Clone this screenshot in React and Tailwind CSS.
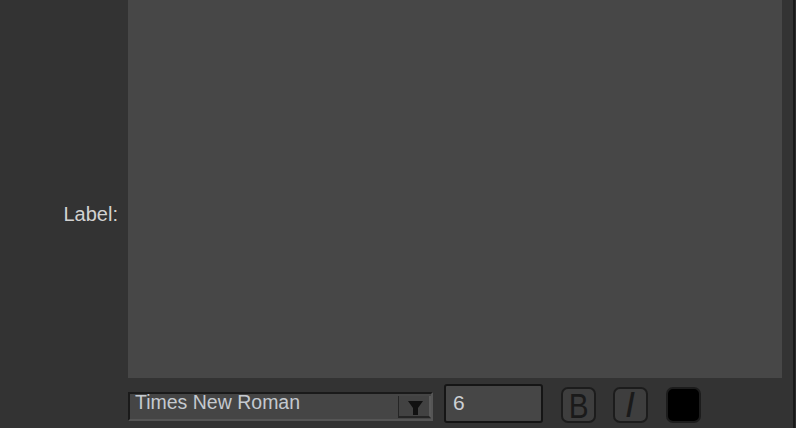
export default function App() {
  const font = { fontFamily: '"Liberation Sans", Arial, Helvetica, sans-serif' };
  return (
    <div className="w-[796px] h-[428px] bg-[#333333] flex overflow-hidden" style={font}>
      <div className="w-[793px] h-full flex flex-col">
        <div className="flex h-[378px]">
          <div className="w-[128px] h-full flex justify-end pr-[10px] pt-[204px]">
            <span className="block text-[20px] leading-none text-[#d2d2d2]">Label:</span>
          </div>
          <div className="w-[654px] h-full bg-[#474747]" />
        </div>
        <div className="flex items-start pl-[128px]">
          <div className="mt-[14px] w-[305px] h-[29px] bg-[#454545] border-t-2 border-l-2 border-[#1a1a1a] border-b-2 border-r-2 border-b-[#555555] border-r-[#555555] flex items-start justify-between">
            <span className="block pl-[5px] -mt-[1px] text-[19.5px] leading-none text-[#c4c9cf] whitespace-nowrap">
              Times New Roman
            </span>
            <div className="mt-[2px] w-[33px] h-[22px] bg-[#424242] border-l border-b-2 border-[#252525] border-r-2 border-r-[#5a5a5a]">
              <svg width="30" height="20" viewBox="0 0 30 20">
                <polygon points="9,5 24,5 19,12 19,19 14,19 14,12" fill="#111111" />
              </svg>
            </div>
          </div>
          <div className="ml-[11px] mt-[6px] w-[99px] h-[39px] border-2 border-[#151515] rounded-[3px] bg-[#464646] flex items-center pl-[7px]">
            <span className="block -mt-[2px] text-[21px] leading-none text-[#cdd0d4]">6</span>
          </div>
          <div className="ml-[18px] mt-[9px] w-[35px] h-[36px] border-2 border-[#1c1c1c] rounded-[7px] bg-[#3e3e3e] flex items-center justify-center">
            <span className="block text-[35px] leading-none text-[#1a1a1a] scale-x-[0.85] mt-[1px]">B</span>
          </div>
          <div className="ml-[17px] mt-[9px] w-[35px] h-[36px] border-2 border-[#1c1c1c] rounded-[7px] bg-[#3e3e3e] flex items-center justify-center">
            <span className="block text-[34px] leading-none italic text-[#1a1a1a]" style={{ fontFamily: '"DejaVu Sans", sans-serif', fontWeight: 200 }}>I</span>
          </div>
          <div className="ml-[18px] mt-[9px] w-[35px] h-[36px] border-2 border-[#1c1c1c] rounded-[7px] bg-black" />
        </div>
      </div>
      <div className="w-[2px] h-full bg-[#1a1a1a]" />
      <div className="w-[1px] h-full bg-[#2c2c2c]" />
    </div>
  );
}
